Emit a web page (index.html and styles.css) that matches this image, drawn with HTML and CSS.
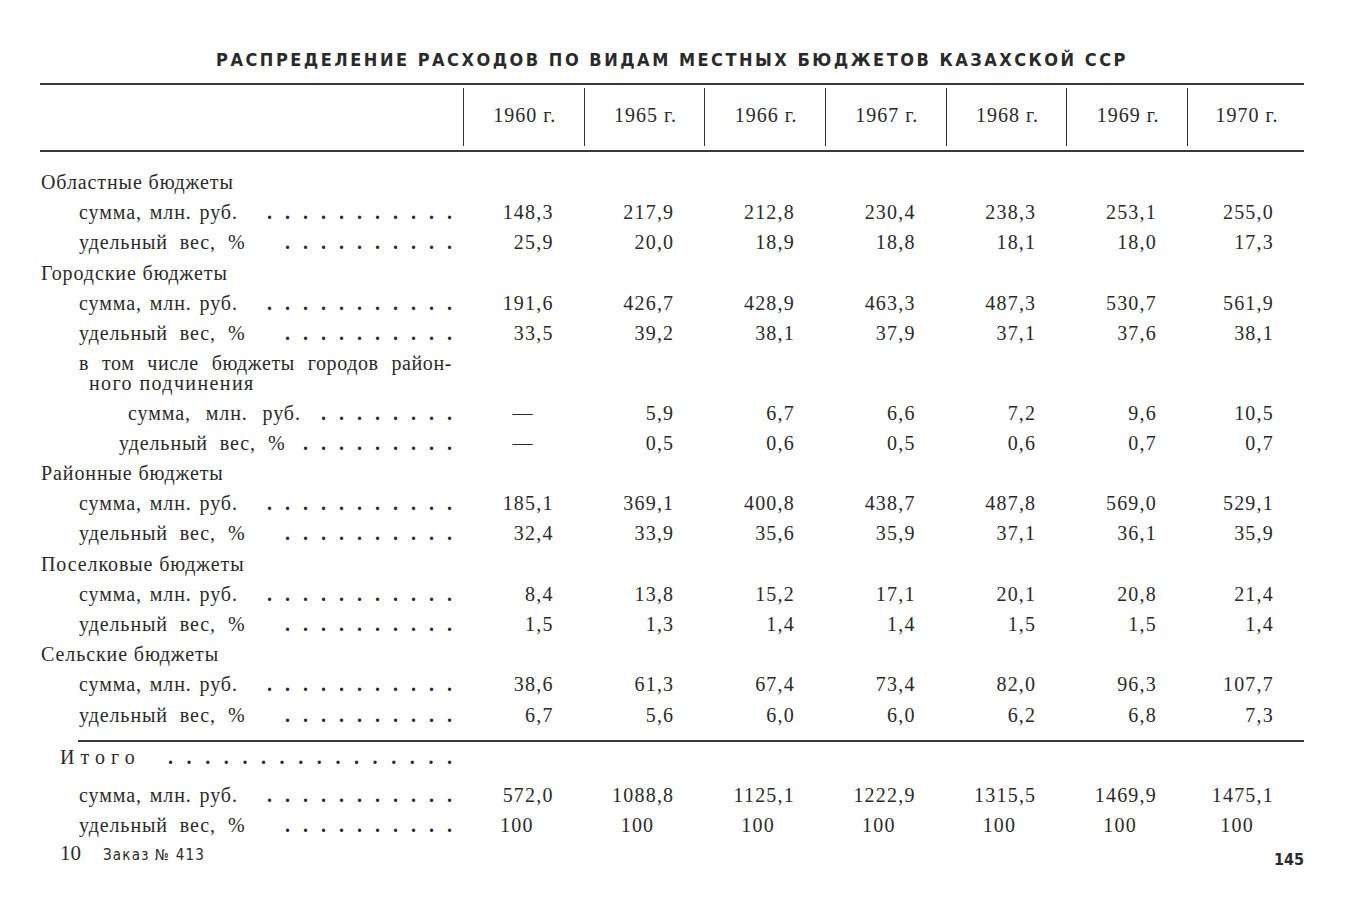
FILE: index.html
```html
<!DOCTYPE html>
<html lang="ru">
<head>
<meta charset="utf-8">
<title>Распределение расходов по видам местных бюджетов Казахской ССР</title>
<link rel="stylesheet" href="styles.css">
</head>
<body>
<main class="page">
  <h1 class="title">РАСПРЕДЕЛЕНИЕ РАСХОДОВ ПО ВИДАМ МЕСТНЫХ БЮДЖЕТОВ КАЗАХСКОЙ ССР</h1>
  <div class="table">
    <div class="head">
      <div class="hstub"></div>
      <div class="hcell">1960 г.</div>
      <div class="hcell">1965 г.</div>
      <div class="hcell">1966 г.</div>
      <div class="hcell">1967 г.</div>
      <div class="hcell">1968 г.</div>
      <div class="hcell">1969 г.</div>
      <div class="hcell">1970 г.</div>
    </div>
    <div class="tbody">
      <div class="row"><div class="label group">Областные бюджеты</div></div>
      <div class="row">
        <div class="label l1"><span class="txt">сумма, млн. руб.</span><span class="dots">...........</span></div>
        <div class="num">148,3</div><div class="num">217,9</div><div class="num">212,8</div><div class="num">230,4</div><div class="num">238,3</div><div class="num">253,1</div><div class="num">255,0</div>
      </div>
      <div class="row">
        <div class="label l1"><span class="txt udel">удельный вес, %</span><span class="dots">..........</span></div>
        <div class="num">25,9</div><div class="num">20,0</div><div class="num">18,9</div><div class="num">18,8</div><div class="num">18,1</div><div class="num">18,0</div><div class="num">17,3</div>
      </div>
      <div class="row"><div class="label group">Городские бюджеты</div></div>
      <div class="row">
        <div class="label l1"><span class="txt">сумма, млн. руб.</span><span class="dots">...........</span></div>
        <div class="num">191,6</div><div class="num">426,7</div><div class="num">428,9</div><div class="num">463,3</div><div class="num">487,3</div><div class="num">530,7</div><div class="num">561,9</div>
      </div>
      <div class="row">
        <div class="label l1"><span class="txt udel">удельный вес, %</span><span class="dots">..........</span></div>
        <div class="num">33,5</div><div class="num">39,2</div><div class="num">38,1</div><div class="num">37,9</div><div class="num">37,1</div><div class="num">37,6</div><div class="num">38,1</div>
      </div>
      <div class="row tall">
        <div class="label l1 multi"><span class="line1">в том числе бюджеты городов район-</span><span class="line2">ного подчинения</span></div>
      </div>
      <div class="row">
        <div class="label l2a"><span class="txt wide">сумма, млн. руб.</span><span class="dots">........</span></div>
        <div class="num c">—</div><div class="num">5,9</div><div class="num">6,7</div><div class="num">6,6</div><div class="num">7,2</div><div class="num">9,6</div><div class="num">10,5</div>
      </div>
      <div class="row">
        <div class="label l2b"><span class="txt wide2">удельный вес, %</span><span class="dots">.........</span></div>
        <div class="num c">—</div><div class="num">0,5</div><div class="num">0,6</div><div class="num">0,5</div><div class="num">0,6</div><div class="num">0,7</div><div class="num">0,7</div>
      </div>
      <div class="row"><div class="label group">Районные бюджеты</div></div>
      <div class="row">
        <div class="label l1"><span class="txt">сумма, млн. руб.</span><span class="dots">...........</span></div>
        <div class="num">185,1</div><div class="num">369,1</div><div class="num">400,8</div><div class="num">438,7</div><div class="num">487,8</div><div class="num">569,0</div><div class="num">529,1</div>
      </div>
      <div class="row">
        <div class="label l1"><span class="txt udel">удельный вес, %</span><span class="dots">..........</span></div>
        <div class="num">32,4</div><div class="num">33,9</div><div class="num">35,6</div><div class="num">35,9</div><div class="num">37,1</div><div class="num">36,1</div><div class="num">35,9</div>
      </div>
      <div class="row"><div class="label group">Поселковые бюджеты</div></div>
      <div class="row">
        <div class="label l1"><span class="txt">сумма, млн. руб.</span><span class="dots">...........</span></div>
        <div class="num">8,4</div><div class="num">13,8</div><div class="num">15,2</div><div class="num">17,1</div><div class="num">20,1</div><div class="num">20,8</div><div class="num">21,4</div>
      </div>
      <div class="row">
        <div class="label l1"><span class="txt udel">удельный вес, %</span><span class="dots">..........</span></div>
        <div class="num">1,5</div><div class="num">1,3</div><div class="num">1,4</div><div class="num">1,4</div><div class="num">1,5</div><div class="num">1,5</div><div class="num">1,4</div>
      </div>
      <div class="row"><div class="label group">Сельские бюджеты</div></div>
      <div class="row">
        <div class="label l1"><span class="txt">сумма, млн. руб.</span><span class="dots">...........</span></div>
        <div class="num">38,6</div><div class="num">61,3</div><div class="num">67,4</div><div class="num">73,4</div><div class="num">82,0</div><div class="num">96,3</div><div class="num">107,7</div>
      </div>
      <div class="row">
        <div class="label l1"><span class="txt udel">удельный вес, %</span><span class="dots">..........</span></div>
        <div class="num">6,7</div><div class="num">5,6</div><div class="num">6,0</div><div class="num">6,0</div><div class="num">6,2</div><div class="num">6,8</div><div class="num">7,3</div>
      </div>
    </div>
    <div class="total">
      <div class="row itogo-row">
        <div class="label l0"><span class="txt itogo">Итого</span><span class="dots wide-dots">................</span></div>
      </div>
      <div class="row">
        <div class="label l1"><span class="txt">сумма, млн. руб.</span><span class="dots">...........</span></div>
        <div class="num">572,0</div><div class="num">1088,8</div><div class="num">1125,1</div><div class="num">1222,9</div><div class="num">1315,5</div><div class="num">1469,9</div><div class="num">1475,1</div>
      </div>
      <div class="row">
        <div class="label l1"><span class="txt udel">удельный вес, %</span><span class="dots">..........</span></div>
        <div class="num c">100</div><div class="num c">100</div><div class="num c">100</div><div class="num c">100</div><div class="num c">100</div><div class="num c">100</div><div class="num c">100</div>
      </div>
    </div>
  </div>
  <footer class="foot">
    <div class="foot-left"><span class="pg">10</span><span class="order">Заказ № 413</span></div>
    <span class="pgno">145</span>
  </footer>
</main>
</body>
</html>
```

FILE: styles.css
```css
html, body {
  margin: 0;
  padding: 0;
  background: #ffffff;
}

body {
  color: #2a2a2a;
  font-family: "Liberation Serif", "Times New Roman", serif;
  font-size: 20px;
}

.page {
  width: 1264px;
  padding: 47px 0 0 40px;
}

.title {
  margin: 0 0 11px 0;
  height: 25px;
  line-height: 25px;
  text-align: center;
  font-family: "DejaVu Sans Condensed", "Liberation Sans Narrow", "Liberation Sans", sans-serif;
  font-stretch: condensed;
  font-weight: bold;
  font-size: 18px;
  letter-spacing: 2.5px;
  word-spacing: 0;
  color: #2a2a2a;
}

.table {
  display: flex;
  flex-direction: column;
}

.head,
.row {
  display: grid;
  grid-template-columns: 423px repeat(6, 120.67px) 117px;
}

.head {
  border-top: 2px solid #3a3a3a;
  border-bottom: 2px solid #3a3a3a;
}

.hcell {
  margin: 3px 0 4px 0;
  height: 58px;
  border-left: 1.6px solid #333;
  display: flex;
  align-items: center;
  justify-content: center;
  letter-spacing: 1px;
  padding-left: 2px;
  padding-bottom: 4px;
  box-sizing: border-box;
}

.tbody {
  padding-top: 15px;
  padding-bottom: 10px;
}

.row {
  height: 30.2px;
  line-height: 30px;
}

.row.tall {
  height: 49.5px;
}

.label {
  grid-column: 1;
  display: flex;
  align-items: baseline;
  padding-right: 11px;
  white-space: nowrap;
  letter-spacing: 0.9px;
}

.label.group {
  padding-left: 1px;
}

.label.l1 {
  padding-left: 39px;
}

.label.l0 {
  padding-left: 20px;
}

.label.l2a {
  padding-left: 88px;
}

.label.l2b {
  padding-left: 79px;
}

.label.multi {
  flex-direction: column;
  align-items: stretch;
  line-height: 20px;
  padding-top: 5px;
  letter-spacing: 0.6px;
}

.line1 {
  display: block;
  text-align: justify;
  text-align-last: justify;
}

.line2 {
  display: block;
  padding-left: 10px;
  letter-spacing: 1.4px;
}

.label.l1 .txt {
  word-spacing: 2px;
}

.label.l1 .txt.udel {
  word-spacing: 6px;
}

.txt.wide {
  word-spacing: 9px;
}

.txt.wide2 {
  word-spacing: 6px;
}

.itogo {
  letter-spacing: 6px;
}

.dots {
  margin-left: auto;
  margin-right: -13px;
  letter-spacing: 13px;
  font-weight: bold;
}

.dots.wide-dots {
  letter-spacing: 13.6px;
  margin-right: -13.6px;
}

.num {
  text-align: right;
  padding-right: 30px;
  letter-spacing: 1.2px;
  white-space: nowrap;
}

.num.c {
  padding-right: 50px;
}

.total {
  border-top: 2px solid #3a3a3a;
  margin-left: 38px;
}

.total .row {
  margin-left: -38px;
}

.itogo-row {
  margin-bottom: 8px;
}

.foot {
  display: flex;
  justify-content: space-between;
  align-items: baseline;
  padding-left: 20px;
  line-height: 26px;
}

.foot-left {
  display: flex;
  align-items: baseline;
  gap: 22px;
}

.pg {
  font-size: 21px;
}

.order {
  font-family: "DejaVu Sans Condensed", "Liberation Sans Narrow", "Liberation Sans", sans-serif;
  font-stretch: condensed;
  font-size: 15px;
  letter-spacing: 1.2px;
}

.pgno {
  font-family: "DejaVu Sans Condensed", "Liberation Sans", sans-serif;
  font-stretch: condensed;
  font-weight: bold;
  font-size: 16px;
  position: relative;
  top: 5px;
}
```
